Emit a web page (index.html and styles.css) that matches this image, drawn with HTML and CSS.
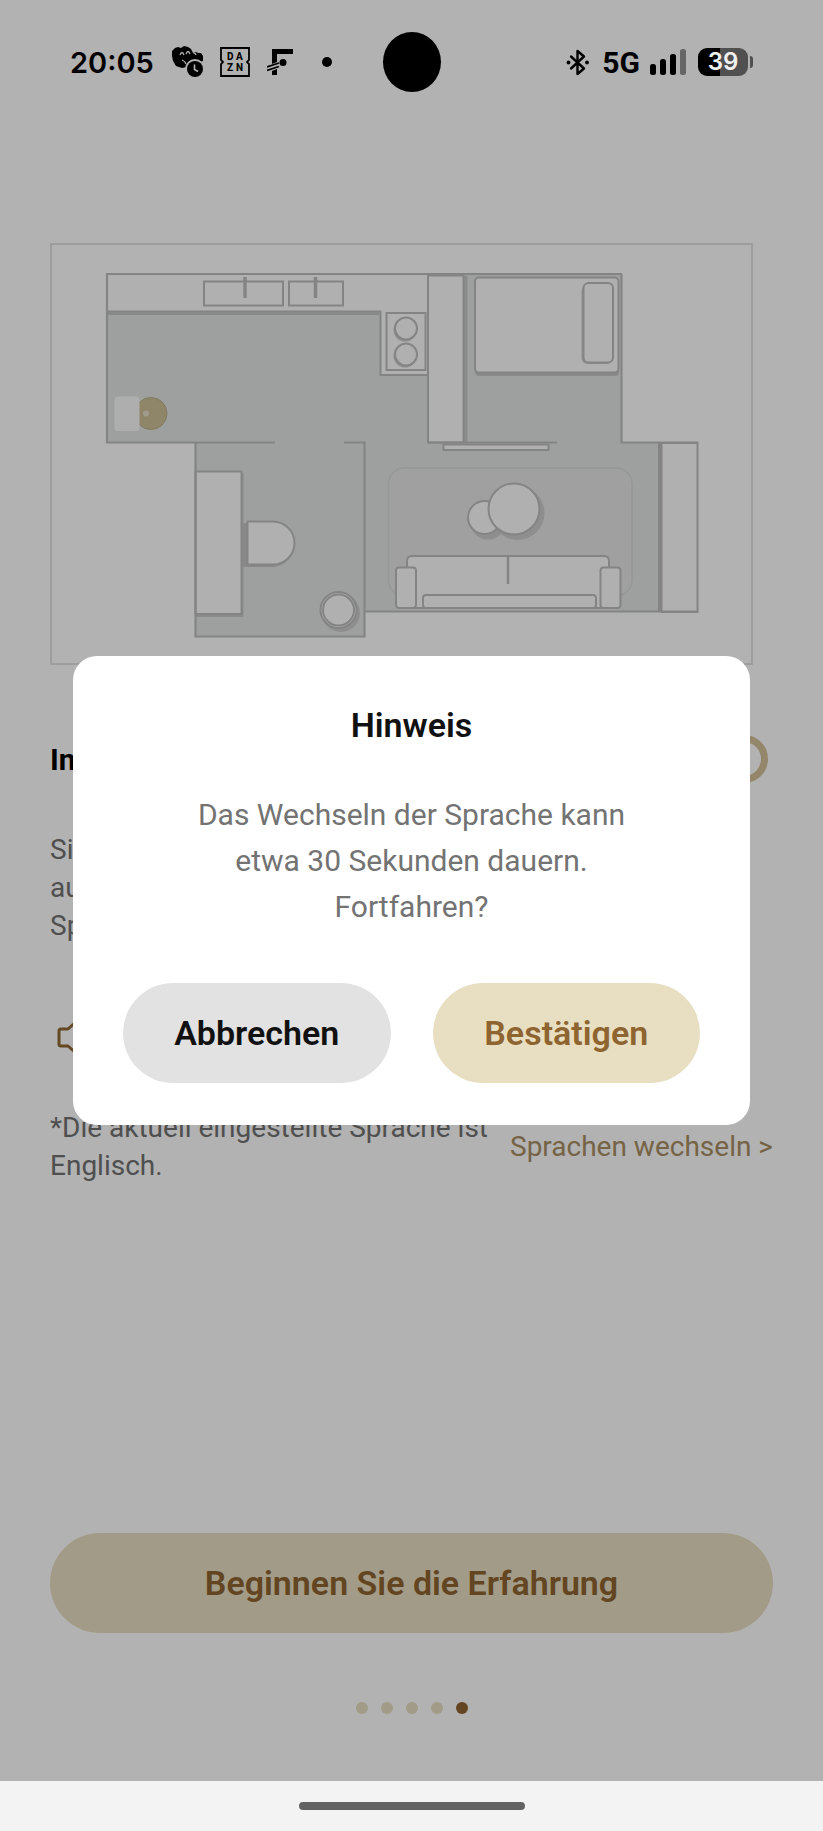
FILE: index.html
```html
<!DOCTYPE html>
<html lang="de">
<head>
    <meta charset="UTF-8">
    <meta name="viewport" content="width=device-width, initial-scale=1.0">
    <title>Hinweis</title>
    <link rel="stylesheet" href="styles.css">
</head>
<body>
    <div class="screen">
        <!-- Statusleiste -->
        <header class="status-bar">
            <div class="status-left">
                <span class="time">20:05</span>
                <svg class="icon-game" width="32" height="34" viewBox="0 0 32 34">
                    <path d="M3 3l3-1 3 1 3-2 4 1 3 2 2 4 3-1 2 1 3 0 2 3v5l-3 1-4-1-5 1-4 5-5 1-6-2-3-5-1-5-2-4 2-1z" fill="#000"/>
                    <path d="M8 10q2-5 4 0M14 9q2-5 4 0M22 9q1-2 2 1M10 15q3 1 4 4" fill="none" stroke="#b2b2b2" stroke-width="1.3"/>
                    <circle cx="23" cy="24" r="10" fill="#b2b2b2"/>
                    <circle cx="23" cy="24" r="8" fill="#000"/>
                    <path d="M22.500 19.500v5l3.500 2" fill="none" stroke="#b2b2b2" stroke-width="1.600"/>
                </svg>
                <svg class="icon-dazn" width="30" height="30" viewBox="0 0 30 30">
                    <path d="M1 1h28v12l-2 2 2 2v12H1V17l2-2-2-2z" fill="none" stroke="#000" stroke-width="1.800"/>
                    <text x="7" y="13">D</text>
                    <text x="16" y="13">A</text>
                    <text x="7" y="24">Z</text>
                    <text x="16" y="24">N</text>
                </svg>
                <svg class="icon-f" width="26" height="27" viewBox="0 0 26 27">
                    <path d="M5 0h21v5H10v8l-5 2z"/>
                    <circle cx="16" cy="13.500" r="3.500"/>
                    <path d="M0 18l12-4M0 21.500l12-4" fill="none" stroke="#000" stroke-width="1.800"/>
                    <path d="M5 22l5-2v6H5z"/>
                </svg>
                <span class="more-dot"></span>
            </div>
            <div class="camera"></div>
            <div class="status-right">
                <svg width="24" height="27" viewBox="0 0 24 27">
                    <path d="M5 7.500l13 12-6.500 5.500V2l6.500 5.500-13 12" fill="none" stroke="#000" stroke-width="2.400" stroke-linejoin="round" stroke-linecap="round"/>
                    <circle cx="2.500" cy="13.500" r="1.900"/>
                    <circle cx="21" cy="13.500" r="1.900"/>
                </svg>
                <span class="network">5G</span>
                <svg class="signal" width="37" height="27" viewBox="0 0 37 27">
                    <rect x="0" y="15" width="6" height="11" rx="2.500"/>
                    <rect x="10" y="10" width="6" height="16" rx="2.500"/>
                    <rect x="20" y="5" width="6" height="21" rx="2.500"/>
                    <rect x="30" y="0" width="6" height="26" rx="2.500" fill="#666"/>
                </svg>
                <span class="battery">39</span>
                <span class="battery-tip"></span>
            </div>
        </header>

        <main class="content">
            <!-- Grundriss -->
            <svg class="floorplan" viewBox="50 243 703 423">
                <rect x="51" y="244" width="701" height="420" fill="none" stroke="#d8d8d8" stroke-width="1.500"/>
                <!-- Boden -->
                <path d="M106.500 274H621.500V442.500H697.500V612H364.500V637H195.500V442.500H106.500z" fill="#e3e6e4"/>
                <g fill="#fdfdfd" stroke="#bebebe" stroke-width="2">
                    <!-- Küche -->
                    <path d="M107 274H428V375H380.500V311.500H107z"/>
                    <path d="M108 313.500H379" fill="none" stroke="#c4c4c4" stroke-width="3"/>
                    <rect x="204" y="281.500" width="79" height="24"/>
                    <rect x="289" y="281.500" width="54" height="24"/>
                    <path d="M245 277v21M315.500 277v21" stroke-width="3.500"/>
                    <rect x="386.500" y="313" width="39" height="57"/>
                    <circle cx="405" cy="330" r="11.500" fill="#ccc" stroke="none"/>
                    <circle cx="405" cy="356" r="11.500" fill="#ccc" stroke="none"/>
                    <circle cx="406" cy="328.500" r="11"/>
                    <circle cx="406" cy="354.500" r="11"/>
                    <!-- Schrank -->
                    <path d="M465 276V442" stroke-width="5" stroke="#c8c8c8"/>
                    <rect x="428" y="275.500" width="35.500" height="167"/>
                    <!-- Bett -->
                    <rect x="475" y="281" width="144" height="95" rx="4" fill="#c4c4c4" stroke="none"/>
                    <rect x="475" y="277.500" width="143.500" height="95" rx="4"/>
                    <rect x="581.500" y="285" width="31" height="79" rx="6" fill="#ccc" stroke="none"/>
                    <rect x="583.500" y="283" width="29.500" height="79.500" rx="5"/>
                    <!-- Fensterbank rechts -->
                    <path d="M660 443V612" stroke-width="4"/>
                    <rect x="661.500" y="443" width="36" height="169"/>
                    <rect x="443.500" y="444.500" width="105" height="5.500"/>
                    <!-- Teppich -->
                    <rect x="388.500" y="468" width="243.500" height="128" rx="16" fill="#e6e6e6" stroke="#d6d8d7" stroke-width="1.500"/>
                    <!-- Schreibtisch -->
                    <path d="M196 473H243.500V617H196z" fill="#c8c8c8" stroke="none"/>
                    <rect x="195.500" y="471.500" width="46" height="142.500"/>
                    <path d="M243 523h30q20 4 21 22-2 19-20 22h-31z" fill="#c4c4c4" stroke="none"/>
                    <path d="M247.500 521.500H273a21.500 21.500 0 0 1 0 43H247.500z"/>
                    <circle cx="341" cy="613" r="19" fill="#ccc" stroke="none"/>
                    <circle cx="338.500" cy="610" r="18"/>
                    <circle cx="338.500" cy="610" r="15.500"/>
                    <!-- Couchtische -->
                    <circle cx="488" cy="521.500" r="18" fill="#ccc" stroke="none"/>
                    <circle cx="517.500" cy="513" r="27" fill="#ccc" stroke="none"/>
                    <circle cx="484.500" cy="517.500" r="16.500"/>
                    <circle cx="514" cy="509" r="25.500"/>
                    <!-- Sofa -->
                    <path d="M407 608V561q0-5 5-5H604q5 0 5 5V608z"/>
                    <path d="M508 557v27" stroke-width="2.500"/>
                    <rect x="423" y="595" width="173" height="13" rx="3"/>
                    <rect x="396" y="567.500" width="20" height="40.500" rx="3"/>
                    <rect x="600.500" y="567.500" width="20" height="40.500" rx="3"/>
                </g>
                <!-- Wände -->
                <path d="M107 273V442.500H275M344 442.500H364.500V636.500H195.500V443M364.500 611.500H698M106 274H622M621.500 274V442.500H698M428 442.500H557" fill="none" stroke="#bebebe" stroke-width="2.200"/>
                <!-- Roboter und Station -->
                <circle cx="151" cy="413.500" r="16" fill="#cdc199" stroke="#bdb086"/>
                <circle cx="146" cy="413.500" r="3" fill="#e6dfc8"/>
                <rect x="114.500" y="396.500" width="25" height="34.500" rx="3" fill="#fafafa"/>
            </svg>

            <div class="setting-row">
                <label class="setting-title" for="switch">In</label>
                <input type="checkbox" id="switch" class="switch">
            </div>
            <p class="description">Si<br>au<br>Sp</p>

            <svg class="speaker" width="40" height="50" viewBox="0 0 40 50">
                <path d="M11 17h7l9-8v33l-9-8h-7q-2 0-2-2V19q0-2 2-2z" fill="none" stroke="#8e6730" stroke-width="3" stroke-linejoin="round"/>
            </svg>

            <div class="language-row">
                <p class="language-info">*Die aktuell eingestellte Sprache ist Englisch.</p>
                <a href="#" class="language-link">Sprachen wechseln &gt;</a>
            </div>

            <div class="bottom">
                <button type="button" class="btn btn-gold btn-start">Beginnen Sie die Erfahrung</button>
                <div class="dots">
                    <span class="dot"></span>
                    <span class="dot"></span>
                    <span class="dot"></span>
                    <span class="dot"></span>
                    <span class="dot active"></span>
                </div>
            </div>
        </main>

        <!-- Dialog -->
        <div class="overlay">
            <div class="dialog" role="dialog" aria-labelledby="dialog-title">
                <h2 class="dialog-title" id="dialog-title">Hinweis</h2>
                <p class="dialog-text">Das Wechseln der Sprache kann etwa 30 Sekunden dauern. Fortfahren?</p>
                <div class="dialog-buttons">
                    <button type="button" class="btn btn-gray">Abbrechen</button>
                    <button type="button" class="btn btn-gold">Bestätigen</button>
                </div>
            </div>
        </div>
    </div>

    <div class="nav-bar"><span class="nav-pill"></span></div>
</body>
</html>
```

FILE: styles.css
```css
* {
    box-sizing: border-box;
}

body {
    margin: 0;
    min-height: 100vh;
    display: flex;
    flex-direction: column;
    background: #fff;
    color: #111;
    font-family: Roboto, "Liberation Sans", sans-serif;
}

h2,
p {
    margin: 0;
}

.screen {
    position: relative;
    flex: 1;
    display: flex;
    flex-direction: column;
}

/* Statusleiste */
.status-bar {
    position: relative;
    z-index: 2;
    height: 124px;
    padding: 0 70px;
    display: grid;
    grid-template-columns: 1fr auto 1fr;
    align-items: center;
    color: #000;
}

.status-left,
.status-right {
    display: flex;
    align-items: center;
}

.status-right {
    justify-content: flex-end;
}

.time {
    font-family: Inter, sans-serif;
    font-size: 29px;
    font-weight: 600;
}

.icon-game {
    margin-left: 18px;
}

.icon-dazn {
    margin-left: 16px;
    font-family: Roboto, sans-serif;
    font-size: 10px;
    font-weight: 800;
}

.icon-f {
    margin-left: 17px;
}

.more-dot {
    width: 10px;
    height: 10px;
    margin-left: 29px;
    border-radius: 50%;
    background: #000;
}

.camera {
    width: 58px;
    height: 60px;
    border-radius: 50%;
    background: #000;
}

.network {
    margin-left: 12px;
    font-size: 30px;
    font-weight: 700;
}

.signal {
    margin-left: 10px;
}

.battery {
    width: 50px;
    height: 28px;
    margin-left: 11px;
    border-radius: 9px;
    background: linear-gradient(90deg, #000 43%, #505050 43%);
    color: #f0f0f0;
    font-family: Inter, sans-serif;
    font-size: 24px;
    font-weight: 600;
    line-height: 28px;
    text-align: center;
}

.battery-tip {
    width: 3px;
    height: 12px;
    margin-left: 2px;
    border-radius: 0 3px 3px 0;
    background: #505050;
}

/* Inhalt */
.content {
    flex: 1;
    display: flex;
    flex-direction: column;
    padding: 119px 50px 67px;
}

.floorplan {
    display: block;
    margin-right: 20px;
}

.setting-row {
    display: flex;
    justify-content: space-between;
    align-items: center;
    margin-top: 69px;
    padding-right: 5px;
}

.setting-title {
    color: #000;
    font-size: 30px;
    font-weight: 700;
}

.switch {
    appearance: none;
    width: 48px;
    height: 48px;
    margin: 0;
    border: 7px solid #d4c098;
    border-radius: 50%;
}

.description,
.language-info,
.language-link {
    font-size: 28px;
    line-height: 38px;
}

.description,
.language-info {
    color: #727272;
}

.description {
    margin-top: 48px;
}

.speaker {
    margin-top: 67px;
}

.language-row {
    display: flex;
    justify-content: space-between;
    align-items: center;
    gap: 16px;
    margin-top: 47px;
}

.language-link {
    color: #a98f65;
    text-decoration: none;
    white-space: nowrap;
}

.bottom {
    margin-top: auto;
}

.btn {
    height: 100px;
    padding: 0;
    border: none;
    border-radius: 50px;
    font-family: inherit;
    font-size: 34px;
    font-weight: 600;
    cursor: pointer;
}

.btn-gold {
    background: #e8dfc2;
    color: #8e6430;
}

.btn-gray {
    background: #e2e2e2;
    color: #111;
}

.btn-start {
    width: 100%;
}

.dots {
    display: flex;
    justify-content: center;
    gap: 13px;
    margin-top: 69px;
}

.dot {
    width: 12px;
    height: 12px;
    border-radius: 50%;
    background: #e8dfc2;
}

.dot.active {
    background: #8e6430;
}

/* Dialog */
.overlay {
    position: absolute;
    inset: 0;
    z-index: 1;
    display: flex;
    align-items: center;
    justify-content: center;
    padding: 0 73px;
    background: rgba(0, 0, 0, 0.3);
}

.dialog {
    width: 100%;
    padding: 49px 50px 42px;
    border-radius: 24px;
    background: #fff;
    text-align: center;
}

.dialog-title {
    font-size: 34px;
    font-weight: 600;
    line-height: 40px;
}

.dialog-text {
    max-width: 460px;
    margin: 47px auto 0;
    color: #737373;
    font-size: 30px;
    line-height: 46px;
}

.dialog-buttons {
    display: grid;
    grid-template-columns: 1fr 1fr;
    gap: 42px;
    margin-top: 53px;
}

/* Navigationsleiste */
.nav-bar {
    height: 50px;
    display: flex;
    align-items: center;
    justify-content: center;
    background: #f3f3f3;
}

.nav-pill {
    width: 226px;
    height: 8px;
    border-radius: 4px;
    background: #636363;
}
```
